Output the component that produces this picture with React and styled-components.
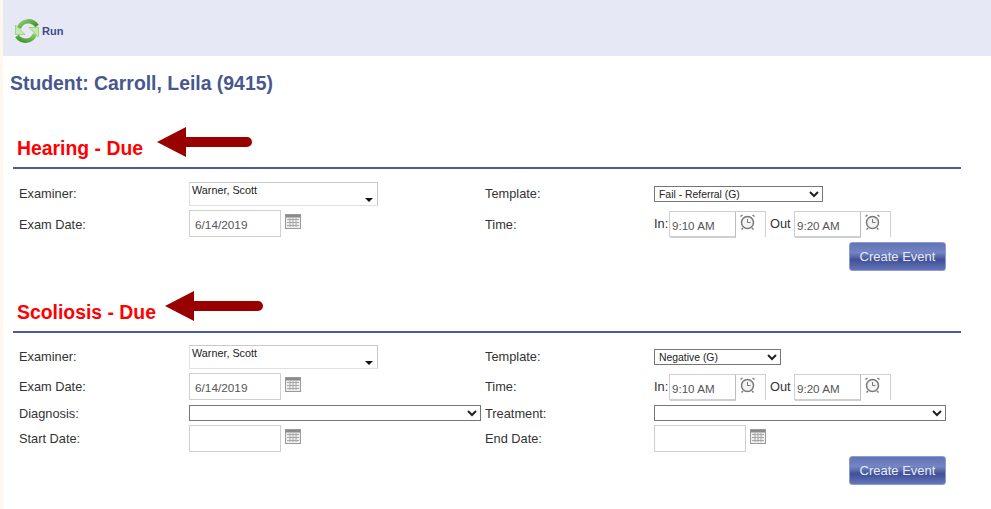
import styled, { createGlobalStyle } from 'styled-components';

const GlobalStyle = createGlobalStyle`
    html, body {
        margin: 0;
        background: #fff6ec;
    }
    body {
        font-family: "Liberation Sans", Arial, sans-serif;
        font-size: 12.8px;
        color: #333;
    }
`;

const Page = styled.div`
    margin-left: 3px;
    min-height: 509px;
    background: #fff;
    overflow: hidden;
`;
const Toolbar = styled.div`
    height: 56px;
    background: #e6e9f5;
    display: flex;
    align-items: center;
    padding: 6px 0 0 11px;
    box-sizing: border-box;
    gap: 2px;
`;
const RunLabel = styled.span`
    font-size: 11px;
    font-weight: 700;
    color: #3a4c8a;
`;
const Student = styled.h1`
    margin: 16px 0 0 7px;
    font-size: 19.4px;
    line-height: 22px;
    font-weight: 700;
    color: #47578f;
`;
const Section = styled.section`
    margin: ${(p) => p.$top}px 30px 0 10px;
`;
const SectionHead = styled.div`
    height: 34px;
    display: flex;
    align-items: center;
    padding-left: 4px;
    border-bottom: 2px solid #4a5ba0;
`;
const SectionTitle = styled.h2`
    margin: 0 0 5px;
    font-size: 19.4px;
    line-height: 30px;
    font-weight: 700;
    color: #f00;
`;
const Arrow = styled.svg`
    margin-left: ${(p) => p.$gap}px;
    margin-bottom: 16px;
    flex: none;
`;
const Row = styled.div`
    display: grid;
    grid-template-columns: 170px 296px 169px 1fr;
    align-items: center;
    padding-left: 6px;
    margin-top: ${(p) => p.$top}px;
`;
const Label = styled.label`
    color: #333;
    padding-top: ${(p) => p.$pad || 0}px;
    padding-bottom: ${(p) => p.$lift || 0}px;
`;
const FieldLine = styled.div`
    display: flex;
    align-items: flex-start;
`;
const Combo = styled.div`
    width: 189px;
    height: 24px;
    box-sizing: border-box;
    border: 1px solid #dfe0e6;
    border-top-color: #c9c9c9;
    border-right-color: #c9c9c9;
    display: flex;
    justify-content: space-between;
    padding: 1px 4px 0 2px;
    font-size: 10.8px;
    line-height: 13px;
    color: #222;
`;
const Caret = styled.span`
    align-self: flex-end;
    margin-bottom: 3px;
    border-left: 4px solid transparent;
    border-right: 4px solid transparent;
    border-top: 4px solid #111;
`;
const Select = styled.select`
    display: block;
    width: ${(p) => p.$w}px;
    height: 16px;
    box-sizing: border-box;
    padding: 0;
    font-family: "Liberation Sans", Arial, sans-serif;
    font-size: 10.4px;
    color: #222;
    background: #fff;
    border: 1px solid #767676;
    border-radius: 0;
`;
const DateInput = styled.input`
    width: 92px;
    height: 27px;
    box-sizing: border-box;
    border: 1.5px solid #cfcfcf;
    padding: 2px 0 0 5px;
    font-family: "Liberation Sans", Arial, sans-serif;
    font-size: 11.8px;
    color: #555;
    outline: none;
`;
const CalendarWrap = styled.span`
    margin: 4px 0 0 4px;
    line-height: 0;
`;
const TimeTag = styled.span`
    width: ${(p) => p.$w}px;
    box-sizing: border-box;
    padding-left: ${(p) => p.$left || 0}px;
    margin-top: 5px;
    color: #333;
`;
const TimeBox = styled.div`
    display: flex;
    width: 97px;
    height: 26px;
    box-sizing: border-box;
    border: 1px solid #cfcfcf;
    border-bottom: none;
`;
const TimeInput = styled.input`
    width: 66px;
    height: 26px;
    box-sizing: border-box;
    border: none;
    border-right: 1px solid #bdbdbd;
    border-bottom: 2px solid #cfcfcf;
    padding: 3px 0 0 2px;
    font-family: "Liberation Sans", Arial, sans-serif;
    font-size: 11.6px;
    color: #555;
    outline: none;
`;
const ClockWrap = styled.span`
    margin: 1px 0 0 3px;
    line-height: 0;
`;
const Actions = styled.div`
    display: flex;
    justify-content: flex-end;
    padding-right: 15px;
    margin-top: ${(p) => p.$top}px;
`;
const CreateButton = styled.button`
    width: 97px;
    height: 29px;
    padding: 0;
    border: 1px solid #8c9bd0;
    border-radius: 3px;
    background: linear-gradient(#6273b6 0%, #7485c4 35%, #5a6aa9 50%, #3f5095 62%, #5566ad 85%, #6475ba 100%);
    color: #e8ebf6;
    font-family: "Liberation Sans", Arial, sans-serif;
    font-size: 13px;
`;

function RunIcon() {
    return (
        <svg width="26" height="26" viewBox="0 0 26 26" fill="none">
            <defs>
                <linearGradient id="runTop" x1="0" y1="0" x2="1" y2="0.6">
                    <stop offset="0" stopColor="#8fd070" />
                    <stop offset="1" stopColor="#3c9429" />
                </linearGradient>
                <linearGradient id="runBottom" x1="1" y1="0" x2="0" y2="1">
                    <stop offset="0" stopColor="#8fd070" />
                    <stop offset="1" stopColor="#3c9429" />
                </linearGradient>
            </defs>
            <path d="M5 10 C8 2 18 1 23 8" stroke="url(#runTop)" strokeWidth="4.5" />
            <path d="M1.5 7 L1.5 16.5 L11 16.5 Z" fill="#c5e8ad" stroke="#7cc25f" strokeWidth="0.6" />
            <path d="M21 16 C18 24 8 25 3 18" stroke="url(#runBottom)" strokeWidth="4.5" />
            <path d="M24.5 9.5 L24.5 19 L15 9.5 Z" fill="#c5e8ad" stroke="#7cc25f" strokeWidth="0.6" />
        </svg>
    );
}

function BigArrow({ width, gap }) {
    return (
        <Arrow $gap={gap} width={width} height="30" viewBox={`0 0 ${width} 30`}>
            <path d={`M0 15 L29 0 L29 10 L${width - 5} 10 A5 5 0 0 1 ${width - 5} 20 L29 20 L29 30 Z`} fill="#990000" />
        </Arrow>
    );
}

function CalendarIcon() {
    return (
        <svg width="16" height="15" viewBox="0 0 16 15">
            <rect x="0.5" y="0.5" width="15" height="14" fill="#eee" stroke="#999" />
            <rect x="1" y="1" width="14" height="2.5" fill="#8a8a8a" />
            <path d="M2 5.5H14M2 8.5H14M2 11.5H14M5 4V13M8 4V13M11 4V13" stroke="#a8a8a8" fill="none" />
        </svg>
    );
}

function ClockIcon() {
    return (
        <svg width="17" height="18" viewBox="0 0 17 18" fill="none" stroke="#777">
            <circle cx="8.5" cy="9.5" r="6" strokeWidth="1.5" fill="#f4f4f4" />
            <path d="M8.5 6V9.5H11.5" strokeWidth="1" />
            <path d="M1.5 3.5L3.5 2M15.5 3.5L13.5 2M4 15L2.5 16.5M13 15L14.5 16.5" strokeWidth="1.4" />
        </svg>
    );
}

function DateField({ value }) {
    return (
        <FieldLine>
            <DateInput defaultValue={value} />
            <CalendarWrap><CalendarIcon /></CalendarWrap>
        </FieldLine>
    );
}

function TimeFields() {
    return (
        <FieldLine>
            <TimeTag $w={15}>In:</TimeTag>
            <TimeBox>
                <TimeInput defaultValue="9:10 AM" />
                <ClockWrap><ClockIcon /></ClockWrap>
            </TimeBox>
            <TimeTag $w={28} $left={4}>Out</TimeTag>
            <TimeBox>
                <TimeInput defaultValue="9:20 AM" />
                <ClockWrap><ClockIcon /></ClockWrap>
            </TimeBox>
        </FieldLine>
    );
}

function ExaminerRows({ template, templateWidth, top, datePad }) {
    return (
        <>
            <Row $top={top}>
                <Label $lift={2}>Examiner:</Label>
                <Combo>Warner, Scott<Caret /></Combo>
                <Label $lift={2}>Template:</Label>
                <Select $w={templateWidth} defaultValue={template}>
                    <option>{template}</option>
                </Select>
            </Row>
            <Row $top={4}>
                <Label $pad={datePad}>Exam Date:</Label>
                <DateField value="6/14/2019" />
                <Label $pad={datePad}>Time:</Label>
                <TimeFields />
            </Row>
        </>
    );
}

export default function App() {
    return (
        <Page>
            <GlobalStyle />
            <Toolbar>
                <RunIcon />
                <RunLabel>Run</RunLabel>
            </Toolbar>
            <Student>Student: Carroll, Leila (9415)</Student>

            <Section $top={39}>
                <SectionHead>
                    <SectionTitle>Hearing - Due</SectionTitle>
                    <BigArrow width={95} gap={14} />
                </SectionHead>
                <ExaminerRows template="Fail - Referral (G)" templateWidth={169} top={13} datePad={2} />
                <Actions $top={5}><CreateButton>Create Event</CreateButton></Actions>
            </Section>

            <Section $top={26}>
                <SectionHead>
                    <SectionTitle>Scoliosis - Due</SectionTitle>
                    <BigArrow width={98} gap={9} />
                </SectionHead>
                <ExaminerRows template="Negative (G)" templateWidth={127} top={12} datePad={0} />
                <Row $top={5}>
                    <Label $pad={1}>Diagnosis:</Label>
                    <Select $w={292}><option></option></Select>
                    <Label $pad={1}>Treatment:</Label>
                    <Select $w={292}><option></option></Select>
                </Row>
                <Row $top={4}>
                    <Label>Start Date:</Label>
                    <DateField value="" />
                    <Label>End Date:</Label>
                    <DateField value="" />
                </Row>
                <Actions $top={4}><CreateButton>Create Event</CreateButton></Actions>
            </Section>
        </Page>
    );
}
